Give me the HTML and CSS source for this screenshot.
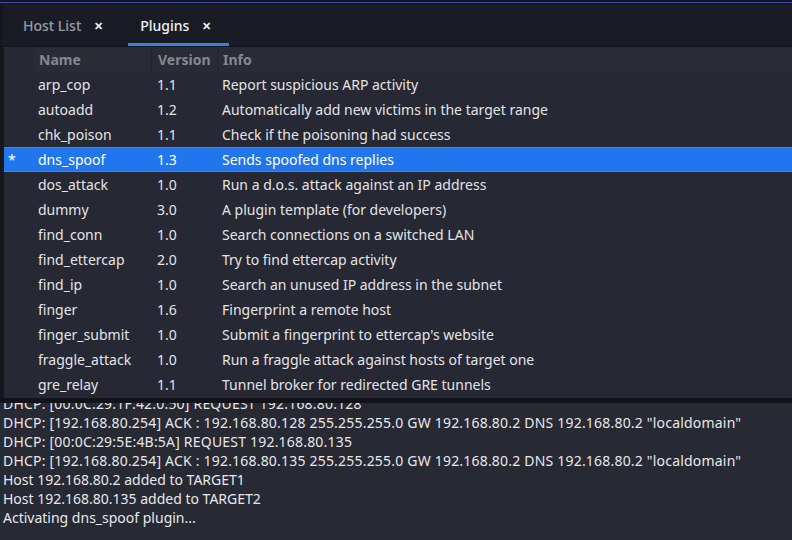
FILE: index.html
```html
<!DOCTYPE html>
<html>
<head>
<meta charset="utf-8">
<link rel="stylesheet" href="styles.css">
</head>
<body>
<div class="app">
  <div class="topline"></div>
  <div class="tabbar">
    <div class="tab"><span class="tab-label">Host List</span><span class="tab-close">✕</span></div>
    <div class="tab active"><span class="tab-label">Plugins</span><span class="tab-close">✕</span></div>
  </div>
  <div class="plugins">
    <div class="row head">
      <div class="c-mark"></div>
      <div class="c-name">Name</div>
      <div class="c-ver">Version</div>
      <div class="c-info">Info</div>
    </div>
    <div class="row"><div class="c-mark"></div><div class="c-name">arp_cop</div><div class="c-ver">1.1</div><div class="c-info">Report suspicious ARP activity</div></div>
    <div class="row"><div class="c-mark"></div><div class="c-name">autoadd</div><div class="c-ver">1.2</div><div class="c-info">Automatically add new victims in the target range</div></div>
    <div class="row"><div class="c-mark"></div><div class="c-name">chk_poison</div><div class="c-ver">1.1</div><div class="c-info">Check if the poisoning had success</div></div>
    <div class="row selected"><div class="c-mark">*</div><div class="c-name">dns_spoof</div><div class="c-ver">1.3</div><div class="c-info">Sends spoofed dns replies</div></div>
    <div class="row"><div class="c-mark"></div><div class="c-name">dos_attack</div><div class="c-ver">1.0</div><div class="c-info">Run a d.o.s. attack against an IP address</div></div>
    <div class="row"><div class="c-mark"></div><div class="c-name">dummy</div><div class="c-ver">3.0</div><div class="c-info">A plugin template (for developers)</div></div>
    <div class="row"><div class="c-mark"></div><div class="c-name">find_conn</div><div class="c-ver">1.0</div><div class="c-info">Search connections on a switched LAN</div></div>
    <div class="row"><div class="c-mark"></div><div class="c-name">find_ettercap</div><div class="c-ver">2.0</div><div class="c-info">Try to find ettercap activity</div></div>
    <div class="row"><div class="c-mark"></div><div class="c-name">find_ip</div><div class="c-ver">1.0</div><div class="c-info">Search an unused IP address in the subnet</div></div>
    <div class="row"><div class="c-mark"></div><div class="c-name">finger</div><div class="c-ver">1.6</div><div class="c-info">Fingerprint a remote host</div></div>
    <div class="row"><div class="c-mark"></div><div class="c-name">finger_submit</div><div class="c-ver">1.0</div><div class="c-info">Submit a fingerprint to ettercap's website</div></div>
    <div class="row"><div class="c-mark"></div><div class="c-name">fraggle_attack</div><div class="c-ver">1.0</div><div class="c-info">Run a fraggle attack against hosts of target one</div></div>
    <div class="row"><div class="c-mark"></div><div class="c-name">gre_relay</div><div class="c-ver">1.1</div><div class="c-info">Tunnel broker for redirected GRE tunnels</div></div>
  </div>
  <div class="divider"></div>
  <div class="log">
    <div class="log-inner">
      <div class="line dhcp">DHCP: [00:0C:29:1F:42:0:50] REQUEST 192.168.80.128</div>
      <div class="line dhcp">DHCP: [192.168.80.254] ACK : 192.168.80.128 255.255.255.0 GW 192.168.80.2 DNS 192.168.80.2 "localdomain"</div>
      <div class="line dhcp">DHCP: [00:0C:29:5E:4B:5A] REQUEST 192.168.80.135</div>
      <div class="line dhcp">DHCP: [192.168.80.254] ACK : 192.168.80.135 255.255.255.0 GW 192.168.80.2 DNS 192.168.80.2 "localdomain"</div>
      <div class="line">Host 192.168.80.2 added to TARGET1</div>
      <div class="line">Host 192.168.80.135 added to TARGET2</div>
      <div class="line">Activating dns_spoof plugin...</div>
    </div>
  </div>
</div>
</body>
</html>
```

FILE: styles.css
```css
* { box-sizing: border-box; }
html, body { margin: 0; padding: 0; }
body {
  width: 792px;
  height: 540px;
  overflow: hidden;
  background: #1b1d25;
  font-family: "Noto Sans", "Open Sans", sans-serif;
  font-size: 14px;
}
.app {
  display: flex;
  flex-direction: column;
  height: 540px;
}
.topline {
  height: 3px;
  background: #12141a;
  border-bottom: 1px solid #4347b4;
}
.tabbar {
  height: 43px;
  background: #1a1c25;
  display: flex;
  padding-left: 8px;
  border-left: 3px solid #14161c;
  border-top: 2px solid #16181c;
}
.tab {
  display: flex;
  align-items: center;
  padding: 3px 18px 0 12px;
  height: 41px;
  color: #9a9ca4;
  border-bottom: 3px solid transparent;
}
.tab + .tab { margin-left: 7px; }
.tab.active {
  color: #f0f0f2;
  border-bottom-color: #3b7ee6;
}
.tab-label { font-weight: 500; }
.tab-close {
  margin-left: 13px;
  font-size: 11px;
  font-weight: bold;
  color: #eeeeee;
}
.plugins {
  background: #262833;
  border-left: 4px solid #15171d;
  border-top: 1px solid #14161c;
  height: 352px;
}
.row {
  display: flex;
  height: 25px;
  align-items: center;
  color: #e4e4e6;
}
.row.head {
  height: 25px;
  color: #858791;
  font-weight: bold;
}
.row.head .c-name, .row.head .c-ver, .row.head .c-info {
  background: #292b35;
  height: 100%;
  display: flex;
  align-items: center;
  border-right: 1px solid #24262f;
}
.row.head .c-name { padding-left: 6px; }
.row.head .c-ver { padding-left: 6px; }
.row.head .c-info { border-right: none; flex: 1; padding-left: 5px; }
.c-mark { width: 29px; padding-left: 4px; }
.c-name { width: 119px; padding-left: 5px; }
.c-ver { width: 66px; padding-left: 5px; }
.c-info { padding-left: 4px; white-space: nowrap; }
.row.selected {
  background: #2176ee;
  color: #ffffff;
  box-shadow: inset 0 1px 0 #3a87f2, inset 0 -1px 0 #3a87f2;
}
.divider {
  height: 5px;
  background: #121419;
}
.log {
  flex: 1;
  background: #272933;
  overflow: hidden;
  padding-left: 3px;
}
.log-inner { margin-top: -9px; }
.line {
  height: 19px;
  line-height: 19px;
  color: #e8e8ea;
  white-space: nowrap;
}
.line.dhcp { letter-spacing: 0.2px; }
```
